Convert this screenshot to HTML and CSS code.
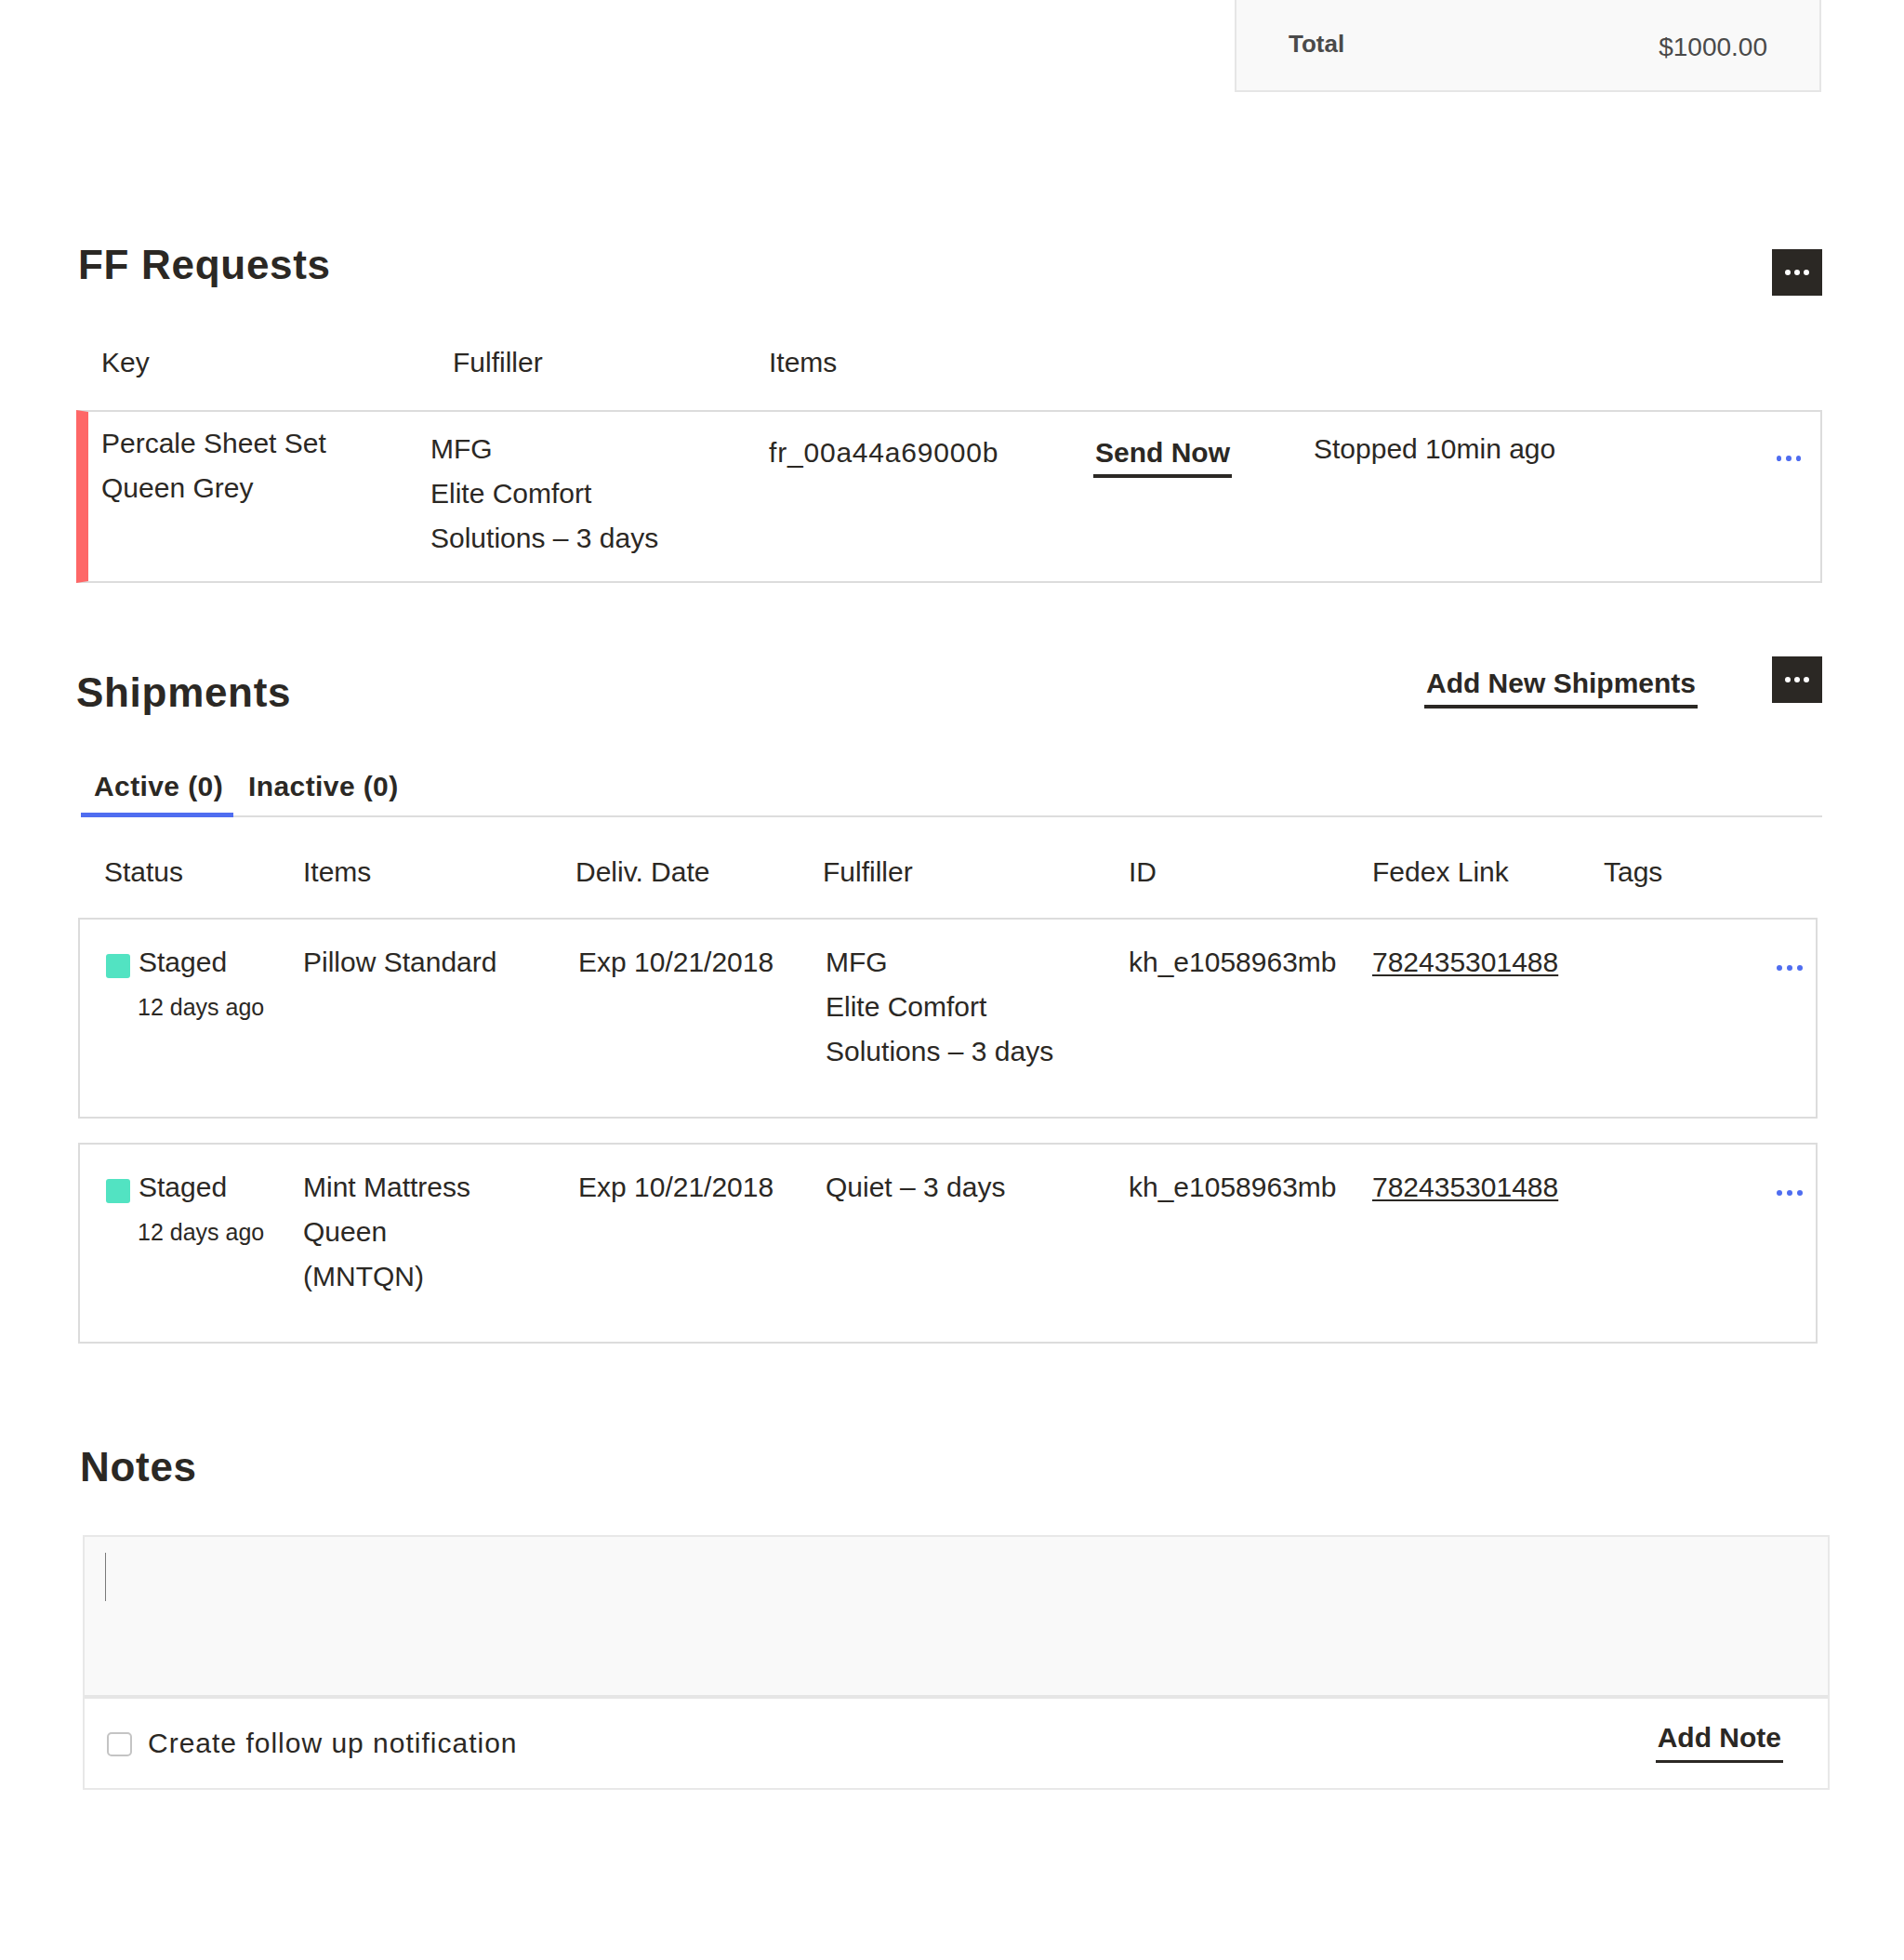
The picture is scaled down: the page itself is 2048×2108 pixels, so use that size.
FILE: index.html
```html
<!DOCTYPE html>
<html lang="en">
<head>
<meta charset="utf-8">
<title>Order detail</title>
<link rel="stylesheet" href="styles.css">
</head>
<body>
<div class="page">

  <div class="summary">
    <span class="total-label">Total</span>
    <span class="total-value">$1000.00</span>
  </div>

  <section class="ff">
    <div class="section-head ff-head">
      <h2>FF Requests</h2>
      <button class="more-btn" aria-label="More"><span></span><span></span><span></span></button>
    </div>

    <div class="ff-grid ff-cols">
      <div>Key</div>
      <div class="ff-col-ful">Fulfiller</div>
      <div>Items</div>
    </div>

    <div class="ff-grid ff-row">
      <div class="c-key">Percale Sheet Set<br>Queen Grey</div>
      <div class="c-ful">MFG<br>Elite Comfort<br>Solutions – 3 days</div>
      <div class="c-items code">fr_00a44a69000b</div>
      <div class="c-send"><a class="link-underline">Send Now</a></div>
      <div class="c-stop">Stopped 10min ago</div>
      <div class="c-dots"><span class="dots"><i></i><i></i><i></i></span></div>
    </div>
  </section>

  <section class="ship">
    <div class="section-head ship-head">
      <h2>Shipments</h2>
      <div class="head-actions">
        <a class="link-underline add-ship">Add New Shipments</a>
        <button class="more-btn" aria-label="More"><span></span><span></span><span></span></button>
      </div>
    </div>

    <div class="tabs">
      <div class="tab active">Active (0)</div>
      <div class="tab">Inactive (0)</div>
    </div>

    <div class="sh-grid sh-cols">
      <div>Status</div>
      <div>Items</div>
      <div>Deliv. Date</div>
      <div>Fulfiller</div>
      <div>ID</div>
      <div>Fedex Link</div>
      <div>Tags</div>
      <div></div>
    </div>

    <div class="sh-grid sh-row">
      <div class="status">
        <span class="sq"></span>
        <div>
          <div>Staged</div>
          <div class="st-time">12 days ago</div>
        </div>
      </div>
      <div>Pillow Standard</div>
      <div class="shift">Exp 10/21/2018</div>
      <div class="shift">MFG<br>Elite Comfort<br>Solutions – 3 days</div>
      <div>kh_e1058963mb</div>
      <div><a class="fedex">782435301488</a></div>
      <div></div>
      <div class="c-dots sh-dots"><span class="dots"><i></i><i></i><i></i></span></div>
    </div>

    <div class="sh-grid sh-row">
      <div class="status">
        <span class="sq"></span>
        <div>
          <div>Staged</div>
          <div class="st-time">12 days ago</div>
        </div>
      </div>
      <div>Mint Mattress<br>Queen<br>(MNTQN)</div>
      <div class="shift">Exp 10/21/2018</div>
      <div class="shift">Quiet – 3 days</div>
      <div>kh_e1058963mb</div>
      <div><a class="fedex">782435301488</a></div>
      <div></div>
      <div class="c-dots sh-dots"><span class="dots"><i></i><i></i><i></i></span></div>
    </div>
  </section>

  <section class="notes">
    <h2>Notes</h2>
    <div class="note-box">
      <div class="note-input"><span class="caret"></span></div>
      <div class="note-foot">
        <label class="follow"><span class="checkbox"></span><span class="follow-text">Create follow up notification</span></label>
        <a class="link-underline add-note">Add Note</a>
      </div>
    </div>
  </section>

</div>
</body>
</html>
```

FILE: styles.css
```css
* { box-sizing: border-box; }

body {
  margin: 0;
  font-family: "Liberation Sans", Arial, sans-serif;
  color: #2b2824;
  background: #fff;
}

.page {
  padding-left: 82px;
  width: 1960px;
  padding-bottom: 150px;
}

/* ---------- summary ---------- */
.summary {
  margin-left: 1246px;
  width: 631px;
  height: 99px;
  background: #f9f9f9;
  border: 2px solid #e6e6e6;
  border-top: none;
  display: flex;
  justify-content: space-between;
  align-items: flex-start;
  padding: 34px 56px 0 56px;
  color: #4a4a4a;
}
.total-label { font-size: 26px; line-height: 26px; font-weight: 700; }
.total-value { font-size: 28px; line-height: 28px; margin-top: 3px; }

/* ---------- headings ---------- */
h2 {
  margin: 0;
  font-size: 44px;
  line-height: 44px;
  font-weight: 700;
  letter-spacing: 0.7px;
  color: #2b2824;
}

.section-head {
  display: flex;
  justify-content: space-between;
  align-items: flex-start;
}

.more-btn {
  width: 54px;
  height: 50px;
  border: none;
  padding: 0;
  background: #2b2824;
  display: flex;
  align-items: center;
  justify-content: center;
  gap: 4px;
  cursor: pointer;
}
.more-btn span {
  width: 6px;
  height: 6px;
  border-radius: 50%;
  background: #fff;
}

.link-underline {
  font-size: 30px;
  line-height: 30px;
  font-weight: 700;
  color: #2b2824;
  padding: 0 2px 8px;
  border-bottom: 4px solid #2b2824;
  text-decoration: none;
  display: inline-block;
  cursor: pointer;
}

.dots {
  display: flex;
  gap: 5px;
}
.dots i {
  width: 6px;
  height: 6px;
  border-radius: 50%;
  background: #4f6df0;
}

/* ---------- FF requests ---------- */
.ff-head { margin-top: 164px; }
.ff-head h2 { margin-left: 2px; }
.ff-head .more-btn { margin-top: 5px; }

.ff-grid {
  display: grid;
  grid-template-columns: 354px 364px 349px 237px 1fr 26px;
  font-size: 30px;
  line-height: 48px;
}

.ff-cols {
  margin-top: 57px;
  line-height: 30px;
  padding-left: 27px;
  padding-right: 23px;
}
.ff-col-ful { padding-left: 24px; }

.ff-row {
  margin-top: 36px;
  border: 2px solid #dcdcdc;
  border-left: 13px solid #fe6767;
  padding: 0 21px 22px 14px;
  align-items: start;
}
.c-key { padding-top: 10px; }
.c-ful { padding-top: 16px; }
.c-items { padding-top: 20px; }
.code { letter-spacing: 0.8px; }
.c-send { padding-top: 29px; line-height: 30px; }
.c-stop { padding-top: 16px; }
.c-dots { padding-top: 47px; }

/* ---------- shipments ---------- */
.ship-head { margin-top: 79px; }
.ship-head h2 { margin-top: 17px; }
.head-actions {
  display: flex;
  align-items: flex-start;
  gap: 80px;
}
.add-ship { margin-top: 14px; }

.tabs {
  margin-top: 64px;
  margin-left: 5px;
  width: 1873px;
  display: flex;
  border-bottom: 2px solid #dddddd;
}
.tab {
  font-size: 30px;
  line-height: 30px;
  font-weight: 700;
  letter-spacing: 0.4px;
  padding: 0 11px 13px 14px;
  border-bottom: 5px solid transparent;
  margin-bottom: -2px;
}
.tab + .tab { padding-left: 16px; }
.tab.active { border-bottom-color: #4f6df0; }

.sh-grid {
  display: grid;
  grid-template-columns: 214px 293px 266px 329px 262px 249px 1fr 28px;
  margin-left: 2px;
  width: 1871px;
  font-size: 30px;
  line-height: 48px;
  padding: 0 14px 0 26px;
  border: 2px solid transparent;
}
.sh-cols {
  margin-top: 42px;
  line-height: 30px;
}
.sh-row {
  border-color: #dcdcdc;
  padding-top: 22px;
  padding-bottom: 46px;
  align-items: start;
  margin-top: 26px;
}
.sh-cols + .sh-row { margin-top: 32px; }
.sh-row .shift { padding-left: 3px; }

.status {
  display: flex;
  align-items: flex-start;
}
.sq {
  width: 26px;
  height: 26px;
  border-radius: 3px;
  background: #52e3c2;
  margin: 15px 9px 0 2px;
  flex: none;
}
.st-time {
  font-size: 25px;
  margin-left: -1px;
}
.sh-dots { padding-top: 27px; }

.fedex {
  color: #2b2824;
  text-decoration: underline;
  text-decoration-thickness: 2px;
  text-underline-offset: 3px;
}

/* ---------- notes ---------- */
.notes {
  margin-top: 111px;
  padding-left: 4px;
}
.note-box {
  margin-top: 51px;
  margin-left: 3px;
  width: 1879px;
  border: 2px solid #e8e8e8;
}
.note-input {
  height: 174px;
  background: #f9f9f9;
  border-bottom: 4px solid #e6e6e6;
  padding: 17px 0 0 22px;
}
.caret {
  display: block;
  width: 1px;
  height: 52px;
  background: #7a7a7a;
}
.note-foot {
  height: 96px;
  display: flex;
  align-items: center;
  justify-content: space-between;
  padding: 0 48px 0 24px;
}
.follow {
  display: flex;
  align-items: center;
  font-size: 30px;
  line-height: 30px;
}
.checkbox {
  width: 27px;
  height: 26px;
  border: 2px solid #c4c4c4;
  border-radius: 5px;
  background: #fff;
  margin-top: 2px;
}
.follow-text {
  margin-left: 17px;
  letter-spacing: 1px;
}
.add-note {
  border-bottom-width: 3px;
  padding-bottom: 9px;
}
```
